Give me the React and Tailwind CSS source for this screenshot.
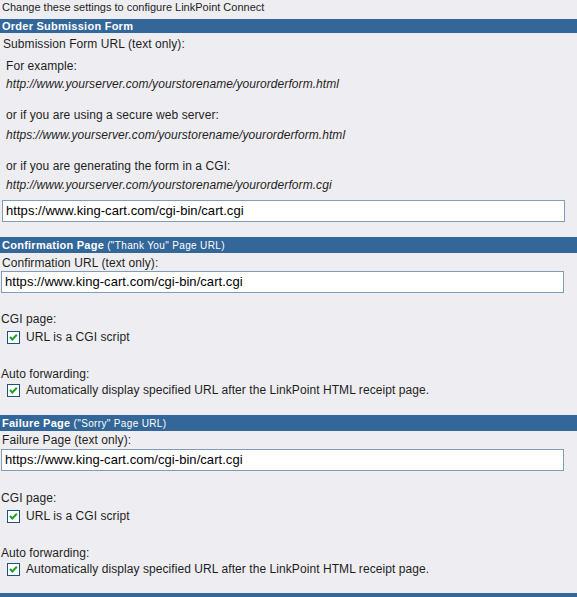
import React from 'react';

const URL = 'https://www.king-cart.com/cgi-bin/cart.cgi';

const Bar = ({ title, note, className = '' }) => (
  <div className={`bg-[#336699] text-white pl-[2px] whitespace-nowrap tracking-normal ${className}`}>
    <span className="font-bold text-[11px] tracking-[0.25px]">{title}</span>
    {note && <span className="text-[10px] tracking-[0.35px]"> {note}</span>}
  </div>
);

const TextBox = ({ className = '' }) => (
  <div
    className={`h-[22px] w-[563px] bg-white border border-[#7f9db9] pl-[3px] text-[13px] leading-[20px] tracking-[0.05px] text-black ${className}`}
  >
    {URL}
  </div>
);

const Check = () => (
  <svg width="13" height="13" viewBox="0 0 13 13" className="shrink-0">
    <rect x="0.5" y="0.5" width="12" height="12" fill="#ffffff" stroke="#1c5180" />
    <polyline points="3,6 5.3,8.5 9.8,3.8" fill="none" stroke="#21a121" strokeWidth="2" />
  </svg>
);

const CheckRow = ({ label, className = '' }) => (
  <div className={`flex items-center gap-[6px] pl-[6px] h-[15px] ${className}`}>
    <Check />
    <span>{label}</span>
  </div>
);

const Forwarding = ({ top }) => (
  <>
    <div className={top}>CGI page:</div>
    <CheckRow label="URL is a CGI script" className="mt-[3px]" />
    <div className="mt-[22px]">Auto forwarding:</div>
    <CheckRow label="Automatically display specified URL after the LinkPoint HTML receipt page." className="mt-[1px]" />
  </>
);

export default function App() {
  return (
    <div className="w-[577px] h-[597px] overflow-hidden bg-[#eeeef2] text-[#1e1e1e] text-[12px] leading-[15px] tracking-[0.07px] font-['Liberation_Sans',Arial,sans-serif]">
      <div className="h-[19px] text-[11px] pl-[2px] tracking-normal">Change these settings to configure LinkPoint Connect</div>

      {/* Order submission */}
      <Bar title="Order Submission Form" className="h-[14px] leading-[14px]" />
      <div className="mt-[4px] pl-[3px]">Submission Form URL (text only):</div>
      <div className="pl-[6px]">
        <div className="mt-[7px]">For example:</div>
        <div className="mt-[3px] italic">http://www.yourserver.com/yourstorename/yourorderform.html</div>
        <div className="mt-[16px]">or if you are using a secure web server:</div>
        <div className="mt-[5px] italic">https://www.yourserver.com/yourstorename/yourorderform.html</div>
        <div className="mt-[16px]">or if you are generating the form in a CGI:</div>
        <div className="mt-[4px] italic">http://www.yourserver.com/yourstorename/yourorderform.cgi</div>
      </div>
      <TextBox className="mt-[7px] ml-[2px]" />

      {/* Confirmation */}
      <Bar title="Confirmation Page" note={'("Thank You" Page URL)'} className="mt-[15px] h-[16px] leading-[16px]" />
      <div className="mt-[3px] pl-[2px]">Confirmation URL (text only):</div>
      <TextBox className="ml-[1px]" />
      <div className="pl-[1px]">
        <Forwarding top="mt-[19px]" />
      </div>

      {/* Failure */}
      <Bar title="Failure Page" note={'("Sorry" Page URL)'} className="mt-[17px] h-[16px] leading-[16px]" />
      <div className="mt-[2px] pl-[2px]">Failure Page (text only):</div>
      <TextBox className="mt-[1px] ml-[1px]" />
      <div className="pl-[1px]">
        <Forwarding top="mt-[20px]" />
      </div>

      <div className="mt-[16px] h-[8px] bg-[#336699]" />
    </div>
  );
}
